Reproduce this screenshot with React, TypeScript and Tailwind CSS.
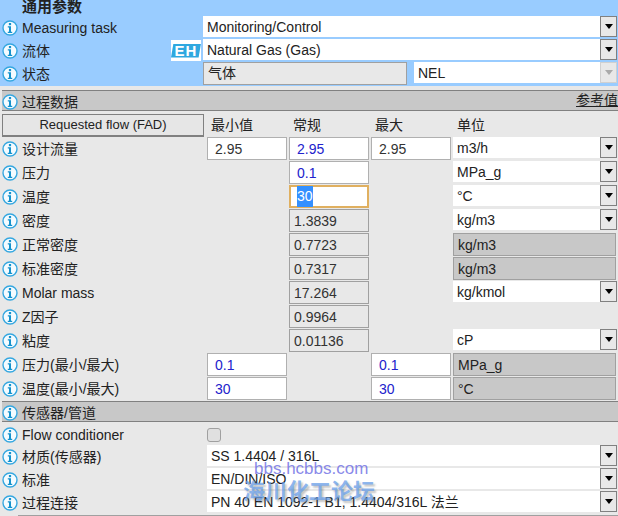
const font = { fontFamily: '"Liberation Sans", "Noto Sans CJK SC", sans-serif' };

function Info() {
  return (
    <svg width="16" height="16" viewBox="0 0 16 16" className="shrink-0">
      <circle cx="8" cy="8" r="7" fill="#f4fbff" stroke="#35a7e0" strokeWidth="1.4" />
      <rect x="6.9" y="3" width="2.2" height="2.2" fill="#1592cc" />
      <path d="M5.8 6.3h3.2v5.4h1.2v1.2H5.8v-1.2h1.2V7.5H5.8z" fill="#1592cc" />
    </svg>
  );
}

function Label({ text, width = "w-[207px]" }: { text?: string; width?: string }) {
  return (
    <div className={`${width} shrink-0 flex items-center gap-[4px] pl-[2px] text-[14px] leading-none text-[#222]`}>
      {text !== undefined && <Info />}
      <span className="whitespace-nowrap">{text}</span>
    </div>
  );
}

function Arrow({ disabled }: { disabled?: boolean }) {
  return (
    <div className={`w-[17px] h-[21px] shrink-0 flex items-center justify-center border bg-[#e8e8e8] ${disabled ? "border-[#d0d0d0]" : "border-[#808080]"}`}>
      <div className={`w-0 h-0 border-l-[4px] border-r-[4px] border-t-[5px] border-l-transparent border-r-transparent ${disabled ? "border-t-[#aaa]" : "border-t-black"}`} />
    </div>
  );
}

function Select({ text, className = "", disabled }: { text: string; className?: string; disabled?: boolean }) {
  return (
    <div className={`h-[21px] flex items-center bg-white pl-[4px] text-[14px] text-[#222] ${className}`}>
      <span className="flex-1 whitespace-nowrap pt-[1px]">{text}</span>
      <Arrow disabled={disabled} />
    </div>
  );
}

function Box({ text, kind }: { text: string; kind: "white" | "blue" | "ro" }) {
  const cls =
    kind === "ro"
      ? "bg-[#e8e8e8] border-[#a0a0a0] text-[#333] pl-[4px]"
      : kind === "blue"
        ? "bg-white border-[#b0b0b0] text-[#2222cc] pl-[7px]"
        : "bg-white border-[#b0b0b0] text-[#333] pl-[7px]";
  return <div className={`w-[80px] h-[23px] border flex items-center pt-[1px] text-[14px] ${cls}`}>{text}</div>;
}

function Slot({ v, kind }: { v?: string; kind?: "white" | "blue" | "ro" }) {
  return <div className="w-[82px] shrink-0">{v !== undefined && kind && <Box text={v} kind={kind} />}</div>;
}

function Unit({ text, fixed }: { text?: string; fixed?: boolean }) {
  if (text === undefined) return <div className="w-[164px]" />;
  if (fixed)
    return (
      <div className="w-[163px] h-[23px] border border-[#a0a0a0] bg-[#c8c8c8] pl-[4px] pt-[1px] flex items-center text-[14px] text-[#222]">
        {text}
      </div>
    );
  return <Select text={text} className="w-[164px]" />;
}

function DataRow(p: {
  label: string;
  min?: [string, "white" | "blue" | "ro"];
  nor?: [string, "white" | "blue" | "ro"];
  max?: [string, "white" | "blue" | "ro"];
  unit?: string;
  fixed?: boolean;
  focus?: boolean;
}) {
  return (
    <div className="h-[24px] flex items-start">
      <div className="h-[23px] flex"><Label text={p.label} /></div>
      <Slot v={p.min?.[0]} kind={p.min?.[1]} />
      {p.focus ? (
        <div className="w-[82px] shrink-0">
          <div className="w-[80px] h-[23px] border-2 border-[#e0b060] bg-white pl-[6px] flex items-center text-[14px]">
            <span className="bg-[#3390ff] text-white">30</span>
          </div>
        </div>
      ) : (
        <Slot v={p.nor?.[0]} kind={p.nor?.[1]} />
      )}
      <Slot v={p.max?.[0]} kind={p.max?.[1]} />
      <Unit text={p.unit} fixed={p.fixed} />
    </div>
  );
}

function SectionHeader({ text, right }: { text: string; right?: string }) {
  return (
    <div className="ml-[2px] h-[21px] bg-[#c8c8c8] border-t border-b border-[#808080] flex items-start justify-between text-[14px] leading-[18px] text-[#222]">
      <div className="flex items-center gap-[4px] pt-[2px]">
        <Info />
        <span>{text}</span>
      </div>
      {right && <span className="underline">{right}</span>}
    </div>
  );
}

function Sensor({ label, value }: { label: string; value: string }) {
  return (
    <div className="h-[23px] flex items-start">
      <div className="h-[23px] flex"><Label text={label} /></div>
      <Select text={value} className="w-[410px]" />
    </div>
  );
}

export default function App() {
  return (
    <div className="relative w-[618px] h-[516px] overflow-hidden bg-[#e8e8e8]" style={font}>
      <div className="h-[86px] bg-[#99ccff]">
        <div className="h-[16px] pl-[22px] text-[15px] leading-[14px] font-bold text-[#222]">通用参数</div>
        <div className="h-[23px] flex items-start">
          <div className="h-[23px] flex"><Label text="Measuring task" width="w-[203px]" /></div>
          <Select text="Monitoring/Control" className="w-[414px]" />
        </div>
        <div className="h-[23px] flex items-start">
          <div className="h-[23px] flex"><Label text="流体" width="w-[171px]" /></div>
          <div className="w-[30px] h-[21px] mt-px shrink-0 bg-white flex items-center justify-center">
            <div className="w-[30px] h-[14px] bg-[#2fa8e0] text-white text-[15px] leading-[14px] font-bold tracking-[1px] text-center [clip-path:polygon(8%_0,100%_0,92%_100%,0_100%)]">EH</div>
          </div>
          <div className="w-[2px]" />
          <Select text="Natural Gas (Gas)" className="w-[414px]" />
        </div>
        <div className="h-[24px] flex items-start">
          <div className="h-[23px] flex"><Label text="状态" width="w-[203px]" /></div>
          <div className="w-[204px] h-[23px] border border-[#a0a0a0] bg-[#e8e8e8] pl-[4px] flex items-center text-[14px] text-[#222] mr-[7px]">气体</div>
          <Select text="NEL" disabled className="w-[203px]" />
        </div>
      </div>
      <div className="h-[4px]" />
      <SectionHeader text="过程数据" right="参考值" />
      <div className="h-[2px]" />
      <div className="h-[24px] flex items-center text-[14px] text-[#222]">
        <div className="w-[207px] shrink-0 pl-[2px]">
          <div className="w-[202px] h-[23px] bg-[#e6e6e6] border border-[#808080] border-b-2 flex items-center justify-center text-[13px]">Requested flow (FAD)</div>
        </div>
        <div className="w-[82px] pl-[4px] shrink-0">最小值</div>
        <div className="w-[82px] pl-[4px] shrink-0">常规</div>
        <div className="w-[82px] pl-[4px] shrink-0">最大</div>
        <div className="pl-[4px]">单位</div>
      </div>
      <div>
        <DataRow label="设计流量" min={["2.95", "white"]} nor={["2.95", "blue"]} max={["2.95", "white"]} unit="m3/h" />
        <DataRow label="压力" nor={["0.1", "blue"]} unit="MPa_g" />
        <DataRow label="温度" focus unit="°C" />
        <DataRow label="密度" nor={["1.3839", "ro"]} unit="kg/m3" />
        <DataRow label="正常密度" nor={["0.7723", "ro"]} unit="kg/m3" fixed />
        <DataRow label="标准密度" nor={["0.7317", "ro"]} unit="kg/m3" fixed />
        <DataRow label="Molar mass" nor={["17.264", "ro"]} unit="kg/kmol" />
        <DataRow label="Z因子" nor={["0.9964", "ro"]} />
        <DataRow label="粘度" nor={["0.01136", "ro"]} unit="cP" />
        <DataRow label="压力(最小/最大)" min={["0.1", "blue"]} max={["0.1", "blue"]} unit="MPa_g" fixed />
        <DataRow label="温度(最小/最大)" min={["30", "blue"]} max={["30", "blue"]} unit="°C" fixed />
      </div>
      <SectionHeader text="传感器/管道" />
      <div className="h-[2px]" />
      <div className="h-[21px] flex items-center">
        <Label text="Flow conditioner" />
        <div className="w-[14px] h-[14px] rounded-[3px] border border-[#a0a0a0] bg-[#e0e0e0]" />
      </div>
      <Sensor label="材质(传感器)" value="SS 1.4404 / 316L" />
      <Sensor label="标准" value="EN/DIN/ISO" />
      <Sensor label="过程连接" value="PN 40 EN 1092-1 B1, 1.4404/316L 法兰" />
      <div className="ml-[18px] h-px bg-[#a0a0a0] mt-[1px]" />

      <div className="absolute left-[254px] top-[459px] text-[17px] leading-[20px] text-[#6a6ae4]/80 whitespace-nowrap">bbs.hcbbs.com</div>
      <div
        className="absolute left-[243px] top-[480px] text-[22px] leading-[24px] font-bold text-[#6a9fe8]/75 whitespace-nowrap"
        style={{ textShadow: "2px 2px 2px rgba(90,90,90,0.35)" }}
      >
        海川化工论坛
      </div>
    </div>
  );
}
